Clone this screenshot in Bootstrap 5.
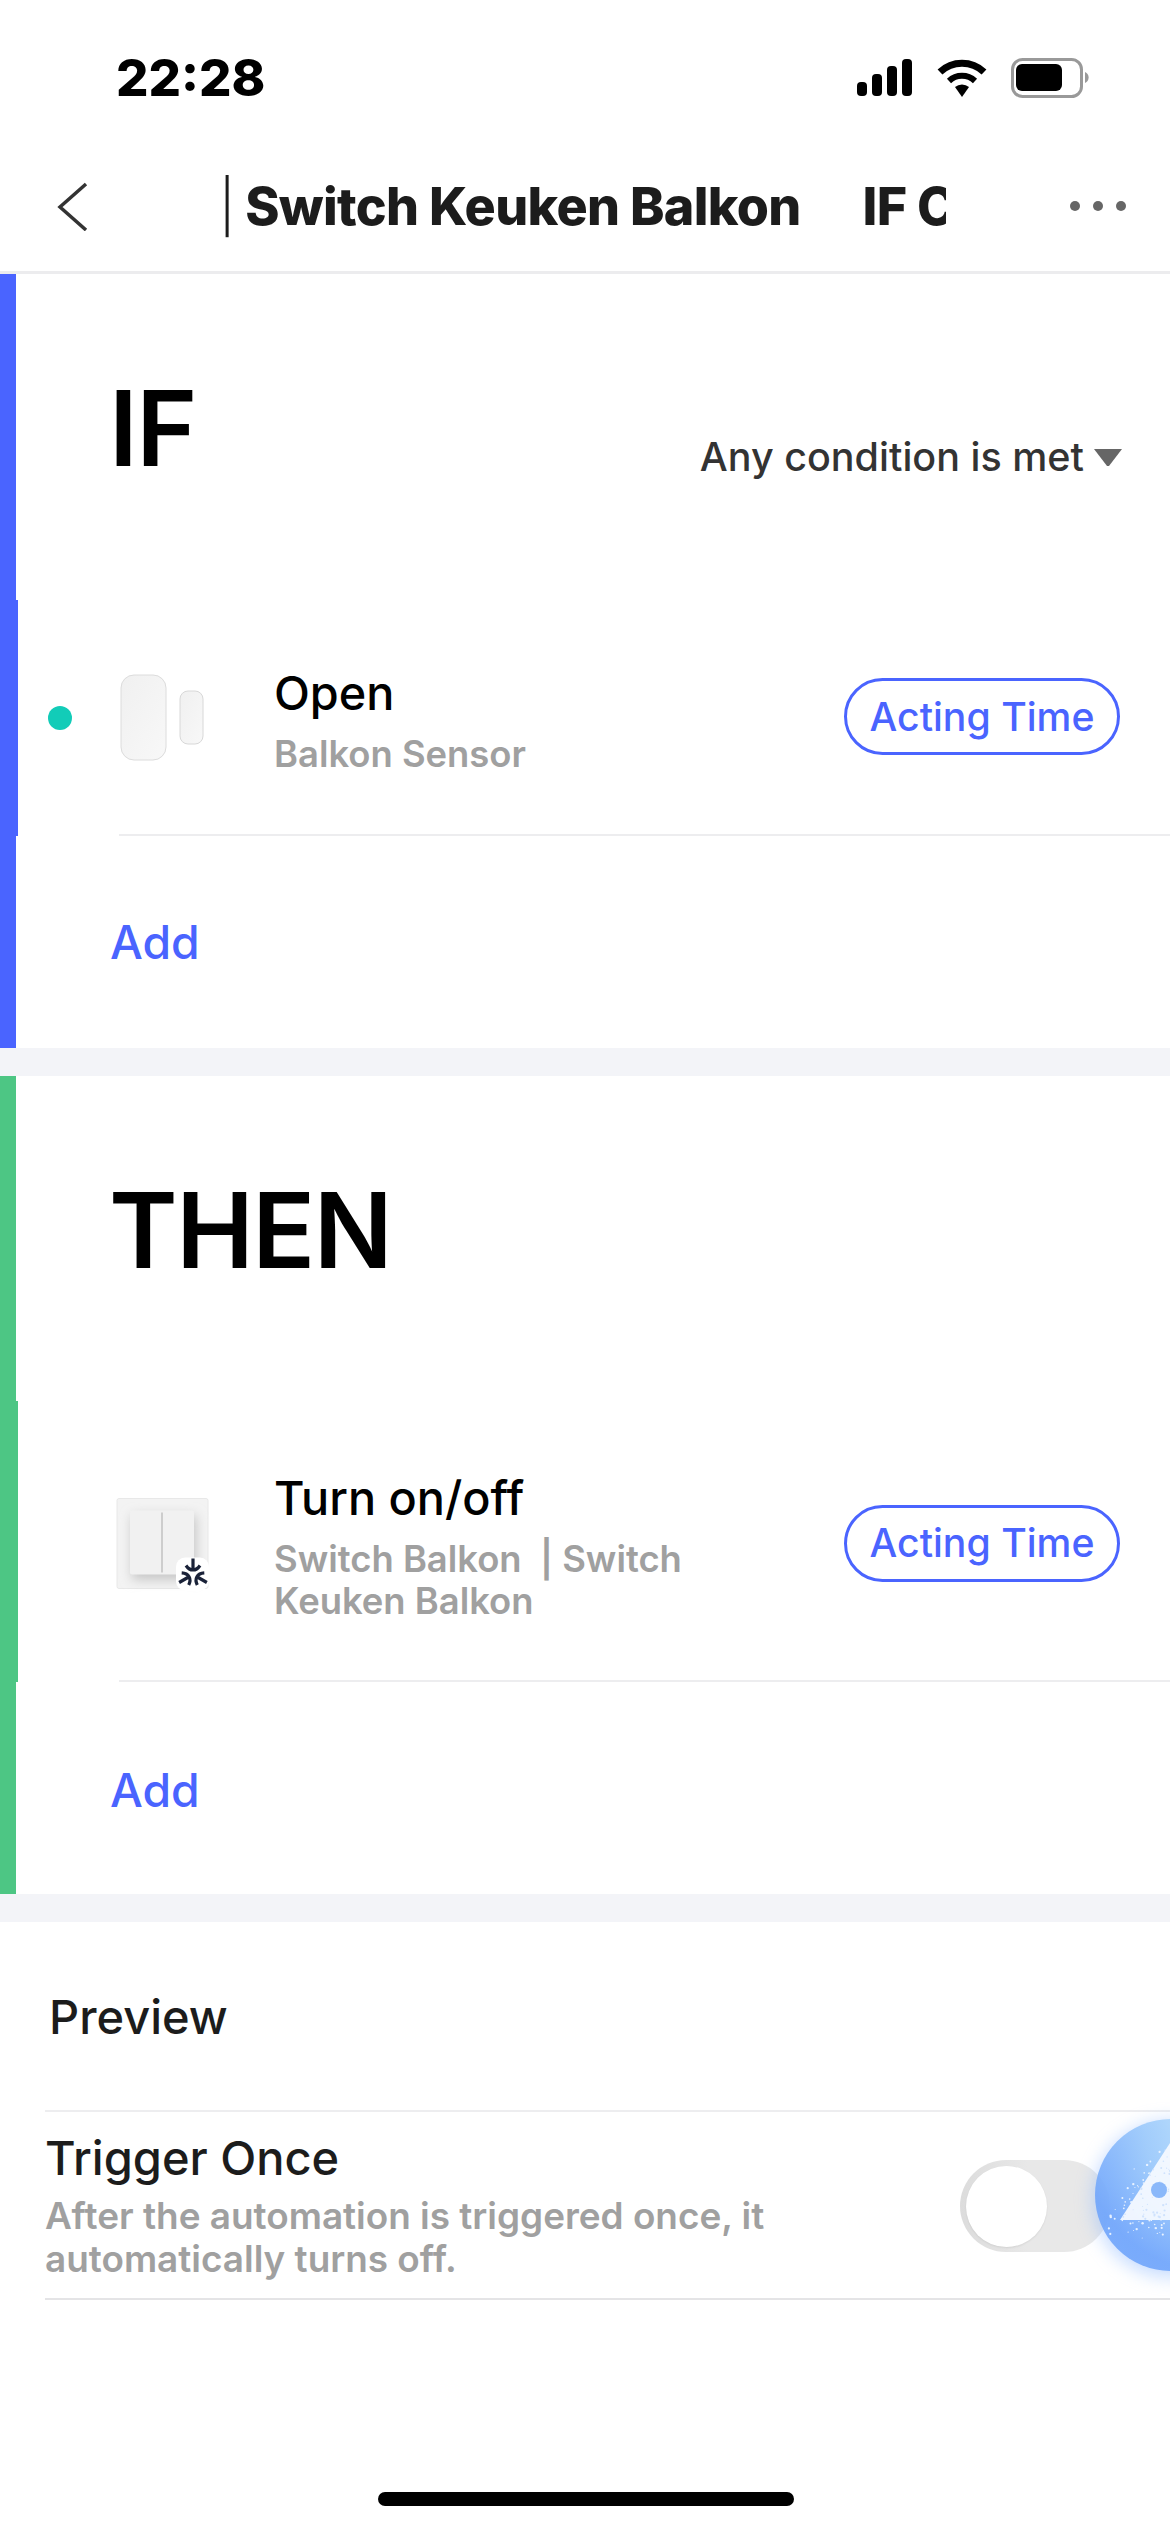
<!DOCTYPE html>
<html lang="en">
<head>
    <meta charset="UTF-8">
    <title>Automation</title>
    <link href="https://cdn.jsdelivr.net/npm/bootstrap@5.3.0/dist/css/bootstrap.min.css" rel="stylesheet">
    <style>
        html, body { margin: 0; background: #fff; }
        body { font-family: Inter, "Liberation Sans", sans-serif; width: 1170px; height: 2532px; overflow: hidden; position: relative; color: #000; }
        .status-bar { height: 140px; padding: 48px 75px 0 116px; align-items: flex-start; }
        .status-time { font-size: 51px; line-height: 60px; font-weight: 800; }
        .status-icons { margin-top: 8px; }
        .top-nav { height: 134px; border-bottom: 3px solid #ececee; padding-left: 56px; padding-right: 44px; }
        .nav-title { width: 727px; margin-left: 131px; overflow: hidden; white-space: nowrap; font-size: 52px; line-height: 64px; padding-top: 2px; font-weight: 800; color: #1c1c1c; letter-spacing: -0.7px; flex: none; }
        .nav-title .sep { font-weight: 300; }
        .nav-title .gap-word { margin-left: 62px; }
        .rule-block { border-left: 16px solid var(--side); }
        .rule-if { --side: #4a64ff; height: 774px; }
        .rule-then { --side: #4dc684; height: 818px; }
        .band { height: 28px; background: #f3f4f8; }
        .rule-head { padding-left: 93px; padding-right: 48px; }
        .rule-if .rule-head { height: 326px; }
        .rule-then .rule-head { height: 325px; }
        .rule-word { font-size: 104px; line-height: 1; font-weight: 600; margin: 0; padding-top: 102px; letter-spacing: -1.5px; }
        .match-mode { font-size: 39.500px; font-weight: 500; color: #333; padding-top: 154px; }
        .caret-down { width: 28px; height: 18px; margin-left: 10px; }
        .rule-row { border-left: 2px solid var(--side); position: relative; }
        .rule-if .rule-row { height: 236px; }
        .rule-then .rule-row { height: 281px; }
        .row-line { position: absolute; left: 101px; right: 0; bottom: 0; height: 2px; background: #ededef; }
        .live-dot { position: absolute; left: 30px; top: 106px; width: 24px; height: 24px; border-radius: 50%; background: #12ccb8; }
        .thumb { width: 96px; margin-left: 102px; flex: none; overflow: visible; }
        .thumb-wide { width: 99px; margin-left: 99px; }
        .row-text { margin-left: 58px; width: 470px; flex: none; padding-top: 4px; }
        .rule-then .row-text { padding-top: 8px; }
        .row-title { font-size: 46.800px; line-height: 56px; font-weight: 500; margin-bottom: 12px; }
        .row-sub { font-size: 36.400px; line-height: 42px; font-weight: 600; color: #a0a0a0; }
        .acting-btn { border: 3px solid #4a64ff; color: #4a64ff; background: #fff; border-radius: 40px; font-size: 39.200px; font-weight: 500; line-height: 1; height: 77px; width: 276px; padding: 0; margin-left: auto; margin-right: 50px; }
        .rule-if .acting-btn { margin-bottom: 3px; }
        .rule-then .acting-btn { margin-top: 3px; }
        .add-link { font-size: 46.300px; line-height: 56px; font-weight: 500; color: #4a64ff; padding-left: 94px; text-decoration: none; display: block; }
        .rule-if .add-link { padding-top: 78px; }
        .rule-then .add-link { padding-top: 80px; }
        .preview-title { font-size: 47px; font-weight: 500; color: #1c1c1c; padding-left: 49px; height: 188px; padding-top: 67px; line-height: 56px; }
        .option-row { margin-left: 45px; border-top: 2px solid #ededef; border-bottom: 2px solid #e4e4e6; height: 190px; }
        .option-title { font-size: 47px; line-height: 56px; font-weight: 500; color: #1c1c1c; padding-top: 18px; margin-bottom: 8px; }
        .option-sub { font-size: 36.900px; line-height: 43px; font-weight: 600; color: #a0a0a0; width: 800px; }
        .toggle-track { position: absolute; left: 960px; top: 2160px; width: 150px; height: 92px; border-radius: 46px; background: linear-gradient(90deg, #dcdcdc, #e8e8e8 45%); }
        .toggle-knob { position: absolute; left: 6px; top: 6px; width: 81px; height: 81px; border-radius: 50%; background: #fff; box-shadow: 0 1px 2px rgba(0,0,0,.08); }
        .assist-ball { position: absolute; left: 1060px; top: 2085px; width: 110px; height: 220px; }
        .home-bar { position: absolute; left: 378px; top: 2492px; width: 416px; height: 14px; border-radius: 7px; background: #000; }
    </style>
</head>
<body>
    <div class="status-bar d-flex justify-content-between">
        <div class="status-time">22:28</div>
        <svg class="status-icons" width="240" height="44" viewBox="855 56 240 44">
            <rect x="857" y="82" width="10" height="14" rx="4" fill="#000"/>
            <rect x="872" y="74" width="10" height="22" rx="4" fill="#000"/>
            <rect x="887" y="66" width="10" height="30" rx="4" fill="#000"/>
            <rect x="902" y="59" width="10" height="37" rx="4" fill="#000"/>
            <path d="M940 72a32 32 0 0 1 44 0" fill="none" stroke="#000" stroke-width="7"/>
            <path d="M949 81a19 19 0 0 1 26 0" fill="none" stroke="#000" stroke-width="6"/>
            <path d="M955 87a11 11 0 0 1 14 0l-7 10z" fill="#000"/>
            <rect x="1012.500" y="59.500" width="69" height="37" rx="10" fill="none" stroke="#999" stroke-width="3"/>
            <rect x="1016" y="64" width="46" height="27" rx="6" fill="#000"/>
            <path d="M1085 72a6 6 0 0 1 0 11z" fill="#999"/>
        </svg>
    </div>

    <div class="top-nav d-flex align-items-center">
        <svg width="32" height="50" viewBox="56 182 32 50"><path d="M86 185 60 208l26 23" fill="none" stroke="#333" stroke-width="3.500"/></svg>
        <div class="nav-title"><span class="sep">|</span> Switch Keuken Balkon<span class="gap-word">IF Condition</span></div>
        <svg width="56" height="12" viewBox="0 0 56 12" class="ms-auto"><circle cx="5" cy="6" r="5" fill="#666"/><circle cx="28" cy="6" r="5" fill="#666"/><circle cx="51" cy="6" r="5" fill="#666"/></svg>
    </div>

    <section class="rule-block rule-if">
        <div class="rule-head d-flex justify-content-between align-items-start">
            <h1 class="rule-word">IF</h1>
            <div class="match-mode d-flex align-items-center">Any condition is met
                <svg class="caret-down" viewBox="0 0 28 18"><path d="M0 0h28L15 17h-2z" fill="#666"/></svg>
            </div>
        </div>
        <div class="rule-row d-flex align-items-center">
            <span class="live-dot"></span>
            <svg class="thumb" height="90" viewBox="0 0 96 90">
                <defs>
                    <linearGradient id="sensorFill" x1="0" y1="0" x2="1" y2="1"><stop offset="0" stop-color="#f0f0f0"/><stop offset="1" stop-color="#f8f8f8"/></linearGradient>
                </defs>
                <rect x="1" y="2" width="45" height="85" rx="13" fill="url(#sensorFill)" stroke="#dcdcdc" stroke-width="1"/>
                <rect x="60" y="18" width="23" height="53" rx="8" fill="url(#sensorFill)" stroke="#d8d8d8" stroke-width="1"/>
            </svg>
            <div class="row-text">
                <div class="row-title">Open</div>
                <div class="row-sub">Balkon Sensor</div>
            </div>
            <button class="acting-btn btn" type="button">Acting Time</button>
            <span class="row-line"></span>
        </div>
        <a class="add-link" href="#">Add</a>
    </section>
    <div class="band"></div>

    <section class="rule-block rule-then">
        <div class="rule-head">
            <h1 class="rule-word">THEN</h1>
        </div>
        <div class="rule-row d-flex align-items-center">
            <svg class="thumb thumb-wide" height="94" viewBox="0 -2.500 99 94">
                <defs><filter id="soft" x="-30%" y="-30%" width="160%" height="160%"><feGaussianBlur stdDeviation="6"/></filter></defs>
                <rect x="0" y="1" width="91" height="90" rx="2" fill="#f3f3f3" stroke="#e8e8e8" stroke-width="1"/>
                <rect x="15" y="18" width="64" height="64" fill="#c4c4c4" filter="url(#soft)"/>
                <rect x="13" y="13" width="64" height="64" rx="2" fill="#f1f1f1"/>
                <rect x="44.500" y="15" width="1" height="60" fill="#aaa"/>
                <rect x="59" y="60" width="33" height="33" rx="9" fill="#fff"/>
                <g fill="none" stroke="#1a2238" stroke-width="3.200">
                    <path d="M76 61v11.500M69 68q3 4.500 7 4.500t7-4.500"/>
                    <path d="M76 61v11.500M69 68q3 4.500 7 4.500t7-4.500" transform="rotate(120 76 77)"/>
                    <path d="M76 61v11.500M69 68q3 4.500 7 4.500t7-4.500" transform="rotate(240 76 77)"/>
                </g>
            </svg>
            <div class="row-text">
                <div class="row-title">Turn on/off</div>
                <div class="row-sub">Switch Balkon&nbsp; | Switch Keuken Balkon</div>
            </div>
            <button class="acting-btn btn" type="button">Acting Time</button>
            <span class="row-line"></span>
        </div>
        <a class="add-link" href="#">Add</a>
    </section>
    <div class="band"></div>

    <div class="preview-title">Preview</div>
    <div class="option-row">
        <div class="option-title">Trigger Once</div>
        <div class="option-sub">After the automation is triggered once, it automatically turns off.</div>
    </div>

    <div class="toggle-track"><div class="toggle-knob"></div></div>
    <svg class="assist-ball" viewBox="1060 2085 110 220">
        <defs>
            <radialGradient id="ballFill" cx="85%" cy="8%" r="95%">
                <stop offset="0" stop-color="#c4e8fd"/>
                <stop offset=".55" stop-color="#9ccafb"/>
                <stop offset="1" stop-color="#6ea4fb"/>
            </radialGradient>
            <filter id="glow" x="-30%" y="-30%" width="160%" height="160%"><feGaussianBlur stdDeviation="9"/></filter>
        </defs>
        <circle cx="1171" cy="2199" r="78" fill="#8cb8ff" opacity=".5" filter="url(#glow)"/>
        <circle cx="1171" cy="2195" r="76" fill="url(#ballFill)" opacity=".88"/>
        <path d="M1120 2220 1172 2140V2220z" fill="#f4f9ff" opacity=".95"/>
        <g id="grain" fill="#cfe2fd"></g>
        <circle cx="1159" cy="2190" r="8" fill="#8ab8fa"/>
        <g id="specks" fill="#e8f2ff"></g>
    </svg>
    <div class="home-bar"></div>
    <script src="https://cdn.jsdelivr.net/npm/bootstrap@5.3.0/dist/js/bootstrap.bundle.min.js"></script>
    <script>
        // grain inside the triangle and loose speckle along its outer edges
        let seed = 7;
        function next() { seed = (seed * 16807) % 2147483647; return seed / 2147483647; }
        function edgeX(y) { return 1120 + (2220 - y) * 0.65; }
        let grain = '', marks = '';
        for (let i = 0; i < 320; i++) {
            const x = 1108 + next() * 62;
            const y = 2150 + next() * 95;
            const r = (0.5 + next() * 0.7).toFixed(1);
            const dot = `<circle cx="${x.toFixed(1)}" cy="${y.toFixed(1)}" r="${r}"/>`;
            const inside = y < 2220 && x > edgeX(y);
            if (inside) { if (next() < 0.3) grain += dot; continue; }
            // thins out away from the triangle
            const dist = y < 2220 ? edgeX(y) - x : y - 2220;
            if (dist < 32 && next() > dist / 32 + 0.35) marks += dot;
        }
        document.getElementById('grain').innerHTML = grain;
        document.getElementById('specks').innerHTML = marks;
    </script>
</body>
</html>
